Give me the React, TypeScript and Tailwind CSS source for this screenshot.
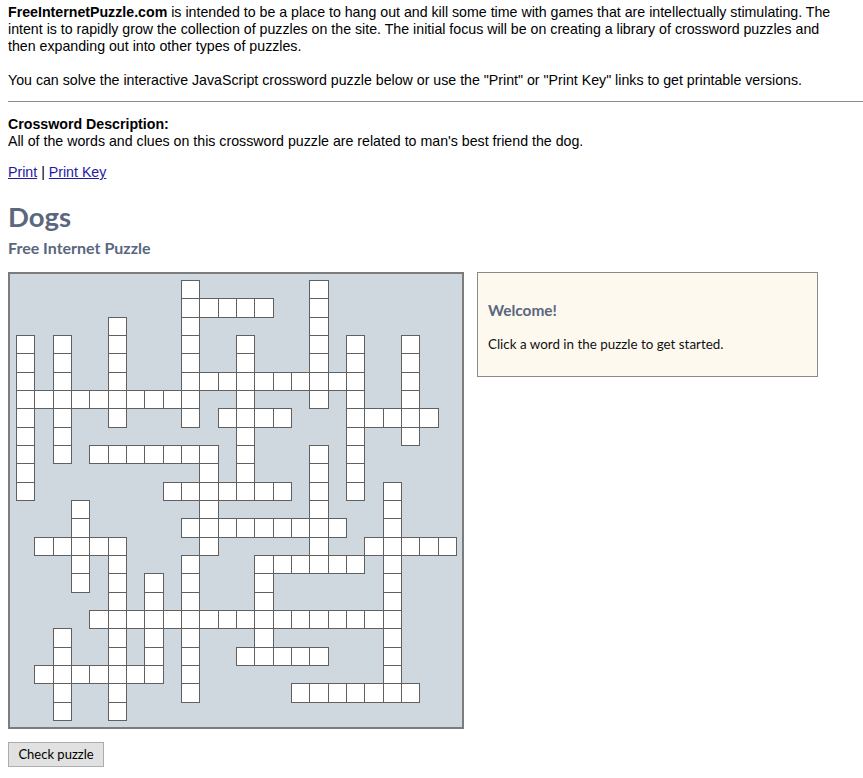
import { FC } from "react";

// [row, col, length, direction]
const words: [number, number, number, "a" | "d"][] = [
  [1, 9, 5, "a"],
  [5, 9, 10, "a"],
  [6, 0, 10, "a"],
  [7, 11, 4, "a"],
  [7, 18, 5, "a"],
  [9, 4, 7, "a"],
  [11, 8, 7, "a"],
  [13, 9, 9, "a"],
  [14, 1, 5, "a"],
  [14, 19, 5, "a"],
  [15, 13, 6, "a"],
  [18, 4, 17, "a"],
  [20, 12, 5, "a"],
  [21, 1, 7, "a"],
  [22, 15, 7, "a"],
  [3, 0, 9, "d"],
  [3, 2, 7, "d"],
  [2, 5, 6, "d"],
  [0, 9, 8, "d"],
  [3, 12, 9, "d"],
  [0, 16, 7, "d"],
  [3, 18, 9, "d"],
  [3, 21, 6, "d"],
  [9, 10, 6, "d"],
  [9, 16, 7, "d"],
  [11, 20, 12, "d"],
  [12, 3, 5, "d"],
  [14, 5, 10, "d"],
  [16, 7, 6, "d"],
  [15, 9, 8, "d"],
  [15, 13, 6, "d"],
  [19, 2, 5, "d"],
];

const cells = (() => {
  const set = new Set<string>();
  words.forEach(([r, c, len, dir]) => {
    for (let i = 0; i < len; i++) {
      const rr = dir === "d" ? r + i : r;
      const cc = dir === "a" ? c + i : c;
      set.add(`${rr}-${cc}`);
    }
  });
  return Array.from(set).map((k) => k.split("-").map(Number));
})();

const Board: FC = () => {
  return (
    <div className="h-[457px] w-[456px] shrink-0 border-2 border-[#7c7c7c] bg-[#cfd8df] p-[6px]">
      <div className="grid grid-cols-[repeat(24,18.333px)] grid-rows-[repeat(24,18.333px)]">
        {cells.map(([r, c]) => (
          <div
            key={`${r}-${c}`}
            className="-mr-px -mb-px border border-[#606060] bg-white"
            style={{ gridRow: r + 1, gridColumn: c + 1 }}
          />
        ))}
      </div>
    </div>
  );
};

const App: FC = () => {
  return (
    <div className="px-2 pt-[4px] font-['Liberation_Sans',Arial,sans-serif] text-[14.2px] leading-[17px] text-black">
      <p className="w-[835px]">
        <b>FreeInternetPuzzle.com</b> is intended to be a place to hang out and
        kill some time with games that are intellectually stimulating. The
        intent is to rapidly grow the collection of puzzles on the site. The
        initial focus will be on creating a library of crossword puzzles and
        then expanding out into other types of puzzles.
      </p>
      <p className="mt-[17px]">
        You can solve the interactive JavaScript crossword puzzle below or use
        the "Print" or "Print Key" links to get printable versions.
      </p>
      <hr className="mt-[12px] -mr-2 border-t border-[#8c8c8c]" />
      <div className="mt-[14px]">
        <b>Crossword Description:</b>
        <div>
          All of the words and clues on this crossword puzzle are related to
          man's best friend the dog.
        </div>
      </div>
      <div className="mt-[14px]">
        <a href="#" className="text-[#1f1aa0] underline">
          Print
        </a>{" "}
        |{" "}
        <a href="#" className="text-[#1f1aa0] underline">
          Print Key
        </a>
      </div>
      <h1 className="mt-[21px] font-['Lato',sans-serif] text-[27.5px] leading-[30px] font-bold text-[#5a677e]">
        Dogs
      </h1>
      <h2 className="mt-[7px] font-['Lato',sans-serif] text-[16px] leading-[18px] font-bold text-[#5a677e]">
        Free Internet Puzzle
      </h2>
      <div className="mt-[15px] flex items-start gap-[13px]">
        <Board />
        <div className="h-[105px] w-[341px] border border-[#8a8a8a] bg-[#fdf9ef] px-[10px] pt-[27px] font-['Lato',sans-serif]">
          <div className="text-[15.4px] leading-[20px] font-bold text-[#5a677e]">
            Welcome!
          </div>
          <div className="mt-[15px] text-[13.4px] leading-[18px] text-[#111]">
            Click a word in the puzzle to get started.
          </div>
        </div>
      </div>
      <button className="mt-[13px] h-[25px] w-[96px] border border-[#adadad] bg-[#e1e1e1] font-['Lato',sans-serif] text-[13px] text-black">
        Check puzzle
      </button>
    </div>
  );
};

export default App;
